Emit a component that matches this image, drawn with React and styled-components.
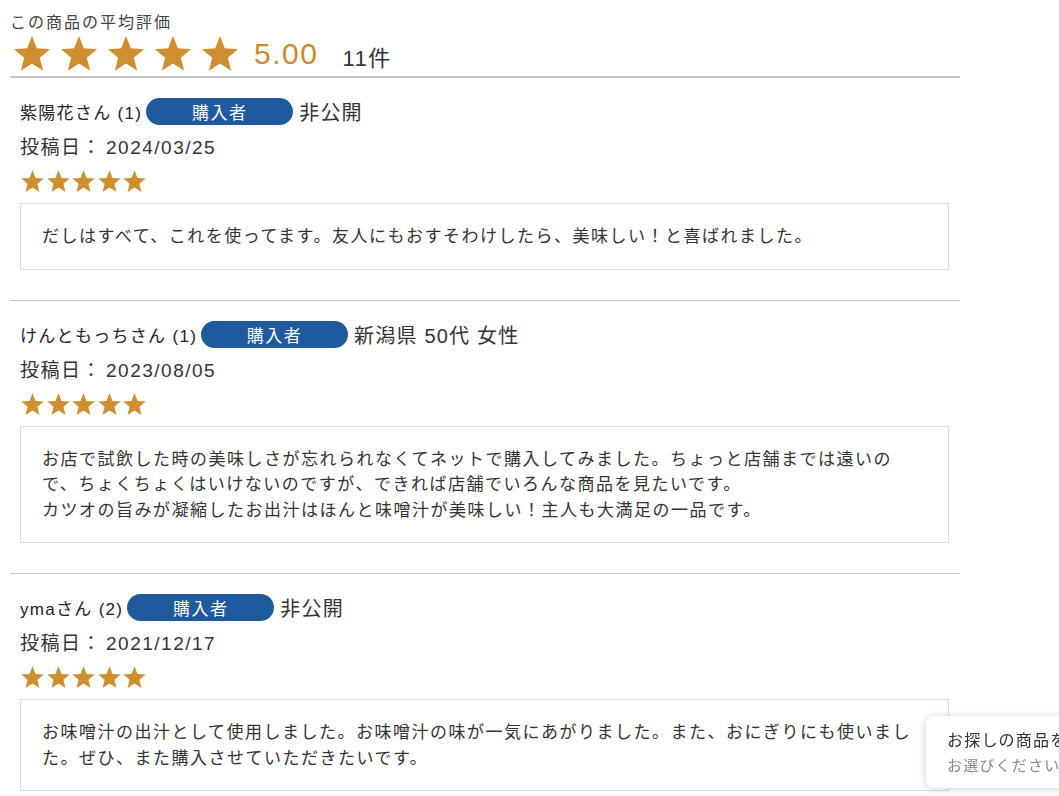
import React from 'react';
import styled, { createGlobalStyle } from 'styled-components';

const GlobalStyle = createGlobalStyle`
  html, body {
    margin: 0;
    padding: 0;
    overflow: hidden;
    background: #ffffff;
  }
  body {
    font-family: "Liberation Sans", "Noto Sans CJK JP", sans-serif;
    color: #333;
  }
`;

const Page = styled.div`
  width: 950px;
  padding: 11px 0 0 10px;
`;

const Title = styled.div`
  font-size: 16px;
  line-height: 24px;
  letter-spacing: 2px;
  color: #444;
`;

const RatingRow = styled.div`
  display: flex;
  align-items: center;
  height: 38px;
  margin-left: 2px;
`;

const Stars = styled.div`
  display: flex;
  gap: ${p => p.$gap}px;
`;

const Average = styled.span`
  font-size: 30px;
  letter-spacing: 1.5px;
  color: #c98a2e;
  margin-left: 14px;
`;

const Count = styled.span`
  font-size: 22px;
  letter-spacing: 1.5px;
  color: #333;
  margin-left: 24px;
  margin-top: 4px;
`;

const Rule = styled.hr`
  margin: ${p => p.$top}px 0 0;
  border: none;
  height: ${p => p.$thick}px;
  background: #c6c6c6;
`;

const Review = styled.div`
  padding: 20px 11px 0 10px;
`;

const NameRow = styled.div`
  display: flex;
  align-items: center;
  height: 27px;
`;

const Name = styled.span`
  font-size: 17px;
  letter-spacing: 1.3px;
  color: #222;
`;

const Badge = styled.span`
  display: flex;
  align-items: center;
  justify-content: center;
  width: 147px;
  height: 27px;
  border-radius: 14px;
  background: #1f5a9e;
  color: #fff;
  font-size: 17px;
  letter-spacing: 1.5px;
  margin: 0 6px 0 4px;
`;

const Profile = styled.span`
  font-size: 20px;
  letter-spacing: 1.2px;
  color: #333;
`;

const PostDate = styled.div`
  margin-top: 9px;
  font-size: 19px;
  line-height: 28px;
  letter-spacing: 1.5px;
  color: #333;
`;

const DateValue = styled.span`
  margin-left: 4px;
`;

const SmallStars = styled(Stars)`
  margin-top: 7px;
  height: 24px;
`;

const Comment = styled.div`
  margin: 10px 0 30px;
  border: 1px solid #dddddd;
  padding: 20px 28px 19px 21px;
  font-size: 17px;
  line-height: 25.5px;
  letter-spacing: 1.5px;
  color: #333;
  white-space: pre-line;
`;

const Toast = styled.div`
  position: fixed;
  left: 926px;
  top: 716px;
  width: 220px;
  height: 72px;
  box-sizing: border-box;
  padding: 12px 0 0 21px;
  background: #fff;
  border-radius: 8px;
  box-shadow: 0 1px 8px rgba(0, 0, 0, 0.18);
  white-space: nowrap;
`;

const ToastTitle = styled.div`
  font-size: 16px;
  line-height: 26px;
  letter-spacing: 1.2px;
  color: #333;
`;

const ToastSub = styled.div`
  font-size: 15px;
  line-height: 24px;
  letter-spacing: 1.2px;
  color: #888;
`;

const Star = ({ size }) => (
  <svg width={size} height={size} viewBox="0 0 24 24">
    <polygon
      fill="#cf8e30"
      points="12,1.2 14.9,8.6 22.8,9.1 16.7,14.2 18.7,22 12,17.7 5.3,22 7.3,14.2 1.2,9.1 9.1,8.6"
    />
  </svg>
);

const StarList = ({ size, gap, Wrap = Stars }) => (
  <Wrap $gap={gap}>
    {[0, 1, 2, 3, 4].map(i => <Star key={i} size={size} />)}
  </Wrap>
);

const reviews = [
  {
    name: '紫陽花さん (1)',
    profile: '非公開',
    date: '2024/03/25',
    text: 'だしはすべて、これを使ってます。友人にもおすそわけしたら、美味しい！と喜ばれました。',
  },
  {
    name: 'けんともっちさん (1)',
    profile: '新潟県 50代 女性',
    date: '2023/08/05',
    text:
      'お店で試飲した時の美味しさが忘れられなくてネットで購入してみました。ちょっと店舗までは遠いので、ちょくちょくはいけないのですが、できれば店舗でいろんな商品を見たいです。\nカツオの旨みが凝縮したお出汁はほんと味噌汁が美味しい！主人も大満足の一品です。',
  },
  {
    name: 'ymaさん (2)',
    profile: '非公開',
    date: '2021/12/17',
    text: 'お味噌汁の出汁として使用しました。お味噌汁の味が一気にあがりました。また、おにぎりにも使いました。ぜひ、また購入させていただきたいです。',
  },
];

const App = () => (
  <>
    <GlobalStyle />
    <Page>
      <Title>この商品の平均評価</Title>
      <RatingRow>
        <StarList size={40} gap={7} />
        <Average>5.00</Average>
        <Count>11件</Count>
      </RatingRow>
      <Rule $top={3} $thick={2} />
      {reviews.map((r, i) => (
        <React.Fragment key={r.date}>
          {i > 0 && <Rule $top={0} $thick={1} />}
          <Review>
            <NameRow>
              <Name>{r.name}</Name>
              <Badge>購入者</Badge>
              <Profile>{r.profile}</Profile>
            </NameRow>
            <PostDate>投稿日：<DateValue>{r.date}</DateValue></PostDate>
            <StarList size={25} gap={0.5} Wrap={SmallStars} />
            <Comment>{r.text}</Comment>
          </Review>
        </React.Fragment>
      ))}
    </Page>
    <Toast>
      <ToastTitle>お探しの商品を</ToastTitle>
      <ToastSub>お選びください</ToastSub>
    </Toast>
  </>
);

export default App;
